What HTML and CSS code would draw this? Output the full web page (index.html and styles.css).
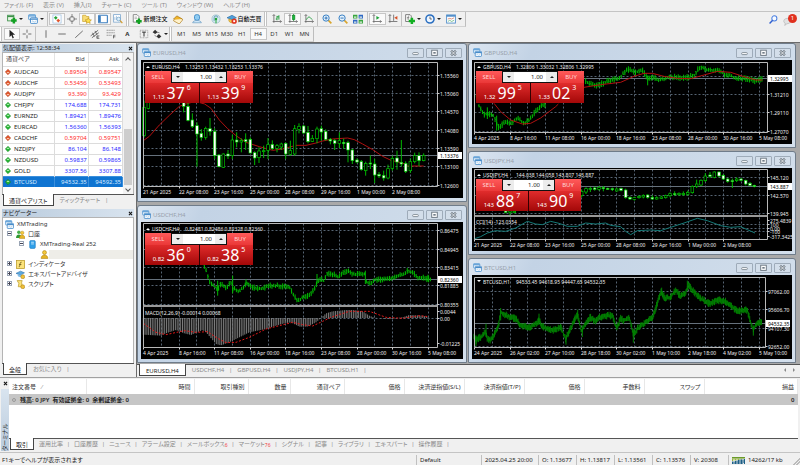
FILE: index.html
```html
<!DOCTYPE html>
<html lang="ja">
<head>
<meta charset="utf-8">
<title>XMTrading</title>
<link rel="stylesheet" href="styles.css">
</head>
<body>
<svg class="sprite" aria-hidden="true">
  <defs>
    <symbol id="i-windows" viewBox="0 0 16 16"><rect x="1" y="1" width="11" height="8" rx="1" fill="#e8f3fc" stroke="#5a9bd4" stroke-width="1.4"/><path d="M1 3h11" stroke="#5a9bd4" stroke-width="2"/><rect x="4" y="6" width="11" height="9" rx="1" fill="#fff" stroke="#3f87c8" stroke-width="1.4"/><path d="M4 8.200h11" stroke="#3f87c8" stroke-width="2"/><path d="M6 12l2-1 2 2 3-2" fill="none" stroke="#7db4e0"/></symbol>
    <symbol id="i-newchart" viewBox="0 0 16 16"><rect x="1" y="2" width="10" height="9" fill="#e7f5e4" stroke="#3b8f48" stroke-width="1.400"/><path d="M1 4h10" stroke="#3b8f48" stroke-width="2"/><path d="M11 6v9M6.500 10.500h9" stroke="#12a022" stroke-width="4"/></symbol>
    <symbol id="i-market" viewBox="0 0 16 16"><rect x="1.500" y="1.500" width="13" height="13" fill="#fff" stroke="#8fb7dc"/><path d="M3 6l3-3 3 3-3 3z" fill="#27a337"/><path d="M7 10.500l3-3 3 3-3 3z" fill="#e0552d"/></symbol>
    <symbol id="i-target" viewBox="0 0 16 16"><circle cx="8" cy="8" r="4" fill="none" stroke="#777" stroke-width="1.400"/><path d="M8 0v6M8 10v6M0 8h6M10 8h6" stroke="#777" stroke-width="1.400"/></symbol>
    <symbol id="i-folderstar" viewBox="0 0 16 16"><path d="M1 2h5l1 2h4v8H1z" fill="#f8dc77" stroke="#c69b22"/><path d="M10 6l1.500 3 3.500.5-2.500 2.300.6 3.200-3.100-1.500-3.100 1.500.6-3.200L5 9.500 8.500 9z" fill="#ffe14d" stroke="#b98a12" stroke-width=".9"/></symbol>
    <symbol id="i-panel" viewBox="0 0 16 16"><rect x="1" y="2" width="14" height="12" rx="1" fill="#fff" stroke="#3d7fc0" stroke-width="1.800"/><path d="M3 3v10" stroke="#3d7fc0" stroke-width="3"/></symbol>
    <symbol id="i-tester" viewBox="0 0 16 16"><rect x="1" y="1" width="11" height="12" fill="#fff" stroke="#7fa8cf" stroke-width="1.300"/><path d="M3 10V5M5.500 10V3M8 10V6" stroke="#7fa8cf"/><circle cx="9" cy="8" r="3" fill="#dff0fb" stroke="#5d93bf"/><path d="M11.500 10.500l3.500 4" stroke="#d39c2b" stroke-width="2"/></symbol>
    <symbol id="i-order" viewBox="0 0 16 16"><path d="M2 1h6l3 3v9H2z" fill="#fff" stroke="#777" stroke-width="1.300"/><path d="M4 5h4M4 7.500h4" stroke="#888"/><path d="M11 7v9M6.500 11.500h9" stroke="#12a022" stroke-width="3.800"/></symbol>
    <symbol id="i-book" viewBox="0 0 16 16"><path d="M6 3l9 5-5 6-9-6z" fill="#f0b429" stroke="#a87410" stroke-width="1.200"/><path d="M1 9v2l9 5 5-6V8" fill="#fff2cc" stroke="#a87410"/></symbol>
    <symbol id="i-person" viewBox="0 0 16 16"><rect x="4" y="1" width="8" height="9" rx="3" fill="#8ecbf2" stroke="#2d80c2" stroke-width="1.300"/><path d="M1 14c1-5 13-5 14 0z" fill="#cfe8fa" stroke="#5f93bd"/></symbol>
    <symbol id="i-signal" viewBox="0 0 16 16"><circle cx="8" cy="8" r="6.500" fill="#d7ebef" stroke="#8bb4c4"/><path d="M5 11V6a3 3 0 016 0" fill="none" stroke="#5f97b5" stroke-width="1.500"/><circle cx="8" cy="8" r="2" fill="#25a43a"/><path d="M8 8v7" stroke="#25a43a" stroke-width="1.600"/></symbol>
    <symbol id="i-auto" viewBox="0 0 16 16"><path d="M0 6l8-4 7 4-7 3z" fill="#4f9ed8" stroke="#2a6da6"/><path d="M3 8v3c2 4 8 4 10 0V8l-5 2z" fill="#f6cb4f" stroke="#b88a1a"/><circle cx="11.500" cy="11.500" r="4.200" fill="#e23420"/><path d="M10 10h3v3h-3z" fill="#fff"/></symbol>
    <symbol id="i-bars" viewBox="0 0 16 16"><path d="M3 1v13M1 12h14M1 3l2-2 2 2M13 10l2 2-2 2" stroke="#666" stroke-width="1.300" fill="none"/><path d="M8 3v7M6 8h2M8 4.500h3M11 2v7" stroke="#1f9a3a" stroke-width="1.500"/></symbol>
    <symbol id="i-candles" viewBox="0 0 16 16"><path d="M3 1v13M1 12h14M1 3l2-2 2 2M13 10l2 2-2 2" stroke="#666" stroke-width="1.300" fill="none"/><path d="M9 0v11" stroke="#138a2b" stroke-width="1.400"/><rect x="7" y="2" width="4" height="7" fill="#1bb53a" stroke="#138a2b"/></symbol>
    <symbol id="i-line" viewBox="0 0 16 16"><path d="M3 1v13M1 12h14M1 3l2-2 2 2M13 10l2 2-2 2" stroke="#666" stroke-width="1.300" fill="none"/><path d="M4 9c3-6 5-5 9 0" fill="none" stroke="#1f9a3a" stroke-width="1.500"/></symbol>
    <symbol id="i-zoomin" viewBox="0 0 16 16"><path d="M9 9l6 6" stroke="#d9a52c" stroke-width="2.600"/><circle cx="6.500" cy="6.500" r="5" fill="#e4f2fc" stroke="#3a80c4" stroke-width="1.600"/><path d="M4 6.500h5M6.500 4v5" stroke="#2a6fb5" stroke-width="1.500"/></symbol>
    <symbol id="i-zoomout" viewBox="0 0 16 16"><path d="M9 9l6 6" stroke="#d9a52c" stroke-width="2.600"/><circle cx="6.500" cy="6.500" r="5" fill="#e4f2fc" stroke="#3a80c4" stroke-width="1.600"/><path d="M4 6.500h5" stroke="#2a6fb5" stroke-width="1.500"/></symbol>
    <symbol id="i-tile" viewBox="0 0 16 16"><path d="M0 1h7v6H0zM9 9h7v6H9z" fill="#3aa63f"/><path d="M9 1h7v6H9zM0 9h7v6H0z" fill="#2f69c4"/><path d="M1.500 4h4v2h-4zM10.500 4h4v2h-4zM1.500 12h4v2h-4zM10.500 12h4v2h-4z" fill="#e6f2e6"/></symbol>
    <symbol id="i-scroll" viewBox="0 0 16 16"><path d="M3 1v13M1 12h14M1 3l2-2 2 2M13 10l2 2-2 2" stroke="#666" stroke-width="1.300" fill="none"/><path d="M7 3l5 3-5 3z" fill="#1fa33a"/></symbol>
    <symbol id="i-shift" viewBox="0 0 16 16"><path d="M3 1v13M1 12h14M1 3l2-2 2 2M9 1v10" stroke="#666" stroke-width="1.300" fill="none"/><path d="M15 3l-5 3 5 3z" fill="#d9532a"/></symbol>
    <symbol id="i-indic" viewBox="0 0 16 16"><path d="M1 1h7l2 2v9H1z" fill="#fff" stroke="#666" stroke-width="1.300"/><path d="M5 10V4c0-1 2-1 2-1M3 6h4" stroke="#555" fill="none"/><path d="M11 6v10M6 11h10" stroke="#12b022" stroke-width="4"/></symbol>
    <symbol id="i-clock" viewBox="0 0 16 16"><circle cx="8" cy="8" r="6.500" fill="#eef6ff" stroke="#2b6fc0" stroke-width="2.400"/><path d="M8 4v4h3" fill="none" stroke="#444" stroke-width="1.200"/></symbol>
    <symbol id="i-template" viewBox="0 0 16 16"><rect x="1" y="1.500" width="14" height="13" fill="#fff" stroke="#4b8ac8" stroke-width="1.400"/><path d="M1 3h14" stroke="#4b8ac8" stroke-width="2.600"/><path d="M3 8l3-1 3 1 4-2" stroke="#c6573c" fill="none"/><path d="M3 12l3-2 3 2 4-2" stroke="#3da05a" fill="none"/></symbol>
    <symbol id="i-cursor" viewBox="0 0 16 16"><path d="M4 1v12l3-3 2 5 2-1-2-5h4z" fill="#222"/></symbol>
    <symbol id="i-cross" viewBox="0 0 16 16"><path d="M8 1v5M8 10v5M1 8h5M10 8h5" stroke="#666" stroke-width="1.500"/></symbol>
    <symbol id="i-vline" viewBox="0 0 16 16"><path d="M8 2v12" stroke="#666" stroke-width="1.500"/></symbol>
    <symbol id="i-hline" viewBox="0 0 16 16"><path d="M2 8h12" stroke="#666" stroke-width="1.500"/></symbol>
    <symbol id="i-trend" viewBox="0 0 16 16"><path d="M2 14L14 3" stroke="#666" stroke-width="1.500"/></symbol>
    <symbol id="i-channel" viewBox="0 0 16 16"><path d="M1 11L13 2M3 14L14 6M4 6l3 6M8 3l3 6" stroke="#555" stroke-width="1.300"/><path d="M15 11h-4v4h4M11 13h3" stroke="#333" fill="none"/></symbol>
    <symbol id="i-fibo" viewBox="0 0 16 16"><path d="M1 2h13M1 6h13M1 10h9" stroke="#777" stroke-width="1.300" stroke-dasharray="2 1"/><path d="M12 15v-5h3M12 12.500h3" stroke="#333" fill="none"/></symbol>
    <symbol id="i-label" viewBox="0 0 16 16"><rect x="2" y="2" width="12" height="12" fill="none" stroke="#777" stroke-dasharray="1.500 1"/><path d="M5 5h6M8 5v7" stroke="#333" stroke-width="1.600"/></symbol>
    <symbol id="i-arrows" viewBox="0 0 16 16"><path d="M5 1l4 4-4 3-4-3zM11 8l4 4-4 3-4-3z" fill="#333"/><path d="M8 5l4 1M4 10l3 2" stroke="#555"/></symbol>
    <symbol id="i-search" viewBox="0 0 16 16"><circle cx="9.500" cy="6" r="4.500" fill="#f6faff" stroke="#4a7fe0" stroke-width="1.800"/><path d="M6.500 9.500L1 15" stroke="#2f5fd0" stroke-width="2.600"/></symbol>
    <symbol id="i-chat" viewBox="0 0 16 16"><path d="M2 5c3-4 11-3 12 1s-4 6-7 6l-4 3 1-4C1 10 1 7 2 5z" fill="#e2e2e2" stroke="#aaa"/></symbol>
    <symbol id="i-accounts" viewBox="0 0 16 16"><circle cx="5" cy="4" r="3" fill="#46b04a"/><path d="M0 14c0-8 10-8 10 0z" fill="#2f9a35"/><circle cx="11" cy="5" r="3" fill="#f4c93c" stroke="#a97f13" stroke-width=".8"/><path d="M6 15c0-8 10-8 10 0z" fill="#e8b526" stroke="#a97f13" stroke-width=".8"/></symbol>
    <symbol id="i-server" viewBox="0 0 16 16"><rect x="3" y="1" width="10" height="14" rx="2" fill="#2f9fe8" stroke="#1a77bd"/><path d="M5.500 4h5M5.500 7h5" stroke="#d5efff" stroke-width="1.400"/></symbol>
    <symbol id="i-user" viewBox="0 0 16 16"><circle cx="8" cy="4.500" r="3.500" fill="#f4c93c" stroke="#a97f13"/><path d="M2 15c0-8 12-8 12 0z" fill="#e8b526" stroke="#a97f13"/></symbol>
    <symbol id="i-func" viewBox="0 0 16 16"><rect x="1" y="1" width="14" height="14" fill="#fbe27a" stroke="#b9961f" stroke-width="1.300"/><path d="M10 4c-2-1-2.500 1-3 4s-1 5-2 4M5.500 8h4" fill="none" stroke="#5c4a0c" stroke-width="1.300"/></symbol>
    <symbol id="i-expert" viewBox="0 0 16 16"><path d="M0 6l8-4 7 3-7 4z" fill="#5ba8de" stroke="#2a6da6"/><path d="M3 8v2c2 3 6 3 8 0V7l-3 2z" fill="#7fbde8"/><circle cx="12" cy="12" r="3.500" fill="#f0c03a" stroke="#a97f13"/></symbol>
    <symbol id="i-script" viewBox="0 0 16 16"><path d="M2 1h9l-1 3 1 8H4l1-6z" fill="#fbe27a" stroke="#b9961f" stroke-width="1.200"/><circle cx="12" cy="12" r="3.500" fill="#f0c03a" stroke="#a97f13"/></symbol>
    <symbol id="i-up" viewBox="0 0 10 10"><path d="M5 .5L9.500 5 5 9.500.5 5z" fill="#27b535" stroke="#0f7a1c" stroke-width=".8"/><path d="M5 2.500L7.500 5h-5z" fill="#baf2b8"/></symbol>
    <symbol id="i-down" viewBox="0 0 10 10"><path d="M5 .5L9.500 5 5 9.500.5 5z" fill="#e2572b" stroke="#a32f10" stroke-width=".8"/><path d="M5 7.500L7.500 5h-5z" fill="#ffd0b8"/></symbol>
    <symbol id="i-min" viewBox="0 0 16 10"><rect x="4.500" y="4.500" width="7" height="2.500" rx="1" fill="#fff" stroke="#6d7883"/></symbol>
    <symbol id="i-max" viewBox="0 0 16 10"><rect x="4.500" y="1.500" width="7" height="6.500" fill="#fff" stroke="#6d7883" stroke-width="1.200"/><rect x="6.500" y="3.800" width="3" height="2" fill="#6d7883"/></symbol>
    <symbol id="i-x" viewBox="0 0 16 10"><path d="M5 2l6 6M11 2L5 8" stroke="#6d7883" stroke-width="2.800"/><path d="M5 2l6 6M11 2L5 8" stroke="#fff" stroke-width="1"/></symbol>
    <symbol id="i-close" viewBox="0 0 8 8"><path d="M1.500 1.500l5 5M6.500 1.500l-5 5" stroke="#111" stroke-width="1.700"/></symbol>
    <symbol id="i-traffic" viewBox="0 0 26 14"><path d="M0 0h26v3H0z" fill="#6b9a2c"/><path d="M1 3v5M4 3v4M7 3v4M10 3v3M13 3v3M16 3v2M19 3v2M22 3v1" stroke="#9ab83f" stroke-width="2"/><path d="M1 9v5M4 9v5M7 8v6M10 7v7M13 6v8M16 5v9M19 5v9M22 5v9M25 4v10" stroke="#1d5f86" stroke-width="2.200"/></symbol>
  </defs>
</svg>

<nav class="menu">
  <a href="#">ファイル (F)</a><a href="#">表示 (V)</a><a href="#">挿入(I)</a><a href="#">チャート (C)</a><a href="#">ツール (T)</a><a href="#">ウィンドウ (W)</a><a href="#">ヘルプ (H)</a>
</nav>

<div class="toolbar">
  <div class="strip main-tools">
    <div class="group drops g-file">
      <button aria-label="新規チャート"><svg><use href="#i-newchart"/></svg><i class="caret"></i></button>
      <button aria-label="組表示"><svg><use href="#i-windows"/></svg><i class="caret"></i></button>
    </div>
    <div class="group g-view">
      <button class="on" aria-label="気配値表示"><svg><use href="#i-market"/></svg></button>
      <button aria-label="データウィンドウ"><svg><use href="#i-target"/></svg></button>
      <button class="on" aria-label="ナビゲーター"><svg><use href="#i-folderstar"/></svg></button>
      <button class="on" aria-label="ターミナル"><svg><use href="#i-panel"/></svg></button>
      <button aria-label="ストラテジーテスター"><svg><use href="#i-tester"/></svg></button>
    </div>
    <div class="group grip g-order">
      <button class="wide"><svg><use href="#i-order"/></svg>新規注文</button>
      <button aria-label="メタエディター"><svg><use href="#i-book"/></svg></button>
      <button aria-label="コミュニティ"><svg><use href="#i-person"/></svg></button>
      <button aria-label="シグナル"><svg><use href="#i-signal"/></svg></button>
      <button class="wide"><svg><use href="#i-auto"/></svg>自動売買</button>
    </div>
    <div class="group grip g-three">
      <button aria-label="バーチャート"><svg><use href="#i-bars"/></svg></button>
      <button class="on" aria-label="ローソク足"><svg><use href="#i-candles"/></svg></button>
      <button aria-label="ラインチャート"><svg><use href="#i-line"/></svg></button>
    </div>
    <div class="group g-zoom">
      <button aria-label="ズームイン"><svg><use href="#i-zoomin"/></svg></button>
      <button aria-label="ズームアウト"><svg><use href="#i-zoomout"/></svg></button>
      <button aria-label="整列"><svg><use href="#i-tile"/></svg></button>
    </div>
    <div class="group g-two">
      <button class="on" aria-label="自動スクロール"><svg><use href="#i-scroll"/></svg></button>
      <button aria-label="チャートシフト"><svg><use href="#i-shift"/></svg></button>
    </div>
    <div class="group drops g-ind">
      <button aria-label="インディケータ"><svg><use href="#i-indic"/></svg><i class="caret"></i></button>
      <button aria-label="時間足"><svg><use href="#i-clock"/></svg><i class="caret"></i></button>
      <button aria-label="定型チャート"><svg><use href="#i-template"/></svg><i class="caret"></i></button>
    </div>
  </div>
  <div class="corner">
    <button aria-label="検索"><svg><use href="#i-search"/></svg></button>
    <button aria-label="通知"><svg><use href="#i-chat"/></svg><span class="badge">1</span></button>
  </div>
</div>

<div class="toolbar">
  <div class="strip">
    <div class="group grip g-cursor">
      <button class="on" aria-label="カーソル"><svg><use href="#i-cursor"/></svg></button>
      <button aria-label="十字カーソル"><svg><use href="#i-cross"/></svg></button>
    </div>
    <div class="group g-draw">
      <button aria-label="垂直線"><svg><use href="#i-vline"/></svg></button>
      <button aria-label="水平線"><svg><use href="#i-hline"/></svg></button>
      <button aria-label="トレンドライン"><svg><use href="#i-trend"/></svg></button>
      <button aria-label="チャネル"><svg><use href="#i-channel"/></svg></button>
      <button aria-label="フィボナッチ"><svg><use href="#i-fibo"/></svg></button>
      <button class="letter">A</button>
      <button aria-label="ラベル"><svg><use href="#i-label"/></svg></button>
      <button aria-label="矢印"><svg><use href="#i-arrows"/></svg><i class="caret"></i></button>
    </div>
    <div class="group grip g-time">
      <button>M1</button><button>M5</button><button>M15</button><button>M30</button><button>H1</button><button class="on">H4</button><button>D1</button><button>W1</button><button>MN</button>
    </div>
  </div>
</div>

<main class="main">
  <aside class="dock">
    <section class="panel">
      <header class="panel-title"><h2>気配値表示: 12:58:34</h2><button aria-label="閉じる"><svg><use href="#i-close"/></svg></button></header>
      <div class="watch">
        <table class="quotes">
          <colgroup><col class="c-pair"><col class="c-price"><col class="c-price"></colgroup>
          <thead><tr><th>通貨ペア</th><th>Bid</th><th>Ask</th></tr></thead>
          <tbody>
            <tr class="down"><td><svg><use href="#i-down"/></svg>AUDCAD</td><td>0.89504</td><td>0.89547</td></tr>
            <tr class="down"><td><svg><use href="#i-down"/></svg>AUDCHF</td><td>0.53456</td><td>0.53493</td></tr>
            <tr class="down"><td><svg><use href="#i-down"/></svg>AUDJPY</td><td>93.390</td><td>93.429</td></tr>
            <tr><td><svg><use href="#i-up"/></svg>CHFJPY</td><td>174.688</td><td>174.731</td></tr>
            <tr><td><svg><use href="#i-up"/></svg>EURNZD</td><td>1.89421</td><td>1.89476</td></tr>
            <tr><td><svg><use href="#i-up"/></svg>EURCAD</td><td>1.56360</td><td>1.56393</td></tr>
            <tr class="down"><td><svg><use href="#i-down"/></svg>CADCHF</td><td>0.59704</td><td>0.59751</td></tr>
            <tr><td><svg><use href="#i-up"/></svg>NZDJPY</td><td>86.104</td><td>86.148</td></tr>
            <tr><td><svg><use href="#i-up"/></svg>NZDUSD</td><td>0.59837</td><td>0.59865</td></tr>
            <tr><td><svg><use href="#i-up"/></svg>GOLD</td><td>3307.56</td><td>3307.88</td></tr>
            <tr class="selected"><td><svg><use href="#i-up"/></svg>BTCUSD</td><td>94532.35</td><td>94592.35</td></tr>
          </tbody>
        </table>
        <div class="scroll"><i class="chev up"></i><span class="thumb"></span><i class="chev dn"></i></div>
      </div>
      <div class="tabs"><button class="active">通貨ペアリスト</button><button>ティックチャート</button></div>
    </section>
    <section class="panel grow">
      <header class="panel-title"><h2>ナビゲーター</h2><button aria-label="閉じる"><svg><use href="#i-close"/></svg></button></header>
      <ul class="tree">
        <li><svg><use href="#i-windows"/></svg>XMTrading
          <ul>
            <li class="open"><i class="toggle"></i><svg><use href="#i-accounts"/></svg>口座
              <ul>
                <li class="open"><i class="toggle"></i><svg><use href="#i-server"/></svg>XMTrading-Real 252
                  <ul><li class="leaf"><svg><use href="#i-user"/></svg><span class="blank"></span></li></ul>
                </li>
              </ul>
            </li>
            <li><i class="toggle"></i><svg><use href="#i-func"/></svg>インディケータ</li>
            <li><i class="toggle"></i><svg><use href="#i-expert"/></svg>エキスパートアドバイザ</li>
            <li><i class="toggle"></i><svg><use href="#i-script"/></svg>スクリプト</li>
          </ul>
        </li>
      </ul>
      <div class="tabs"><button class="active">全般</button><button>お気に入り</button></div>
    </section>
  </aside>

  <div class="work">
    <div class="desk">
      <div class="column">
        <article class="window" data-chart="eurusd"></article>
        <article class="window" data-chart="usdchf"></article>
      </div>
      <div class="column">
        <article class="window" data-chart="gbpusd"></article>
        <article class="window" data-chart="usdjpy"></article>
        <article class="window" data-chart="btcusd"></article>
      </div>
    </div>
    <div class="tabs chart-tabs">
      <button class="active">EURUSD,H4</button><button>USDCHF,H4</button><button>GBPUSD,H4</button><button>USDJPY,H4</button><button>BTCUSD,H1</button>
      <span class="pager"><i class="tri left"></i><i class="tri right"></i></span>
    </div>
  </div>
</main>

<section class="terminal">
  <div class="side"><button aria-label="閉じる"><svg><use href="#i-close"/></svg></button><h2>ターミナル</h2></div>
  <div class="term-body">
    <table class="orders">
      <colgroup><col class="o1"><col class="o2"><col class="o3"><col class="o4"><col class="o3"><col class="o5"><col class="o5"><col class="o5"><col class="o5"><col class="o5"><col class="o5"><col></colgroup>
      <thead><tr><th>注文番号 <span class="sort">⁄</span></th><th>時間</th><th>取引種別</th><th>数量</th><th>通貨ペア</th><th>価格</th><th>決済逆指値(S/L)</th><th>決済指値(T/P)</th><th>価格</th><th>手数料</th><th>スワップ</th><th>損益</th></tr></thead>
      <tbody><tr><td colspan="11"><i class="dot"></i>残高: 0 JPY&nbsp; 有効証拠金: 0&nbsp; 余剰証拠金: 0</td><td>0</td></tr></tbody>
    </table>
    <div class="tabs term-tabs">
      <button class="active">取引</button><button>運用比率</button><button>口座履歴</button><button>ニュース</button><button>アラーム設定</button><button>メールボックス<sub>6</sub></button><button>マーケット<sub>76</sub></button><button>シグナル</button><button>記事</button><button>ライブラリ</button><button>エキスパート</button><button>操作履歴</button>
    </div>
  </div>
</section>

<footer class="status">
  <span class="hint">F1キーでヘルプが表示されます</span>
  <span class="s-name">Default</span><span class="s-date">2025.04.25 20:00</span><span>O: 1.13677</span><span>H: 1.13817</span><span>L: 1.13561</span><span>C: 1.13576</span><span>V: 20308</span>
  <span class="s-net"><svg><use href="#i-traffic"/></svg>14262/17 kb</span>
</footer>
<script src="charts.js"></script>
</body>
</html>
```
FILE: styles.css
```css
* { box-sizing: border-box; }

body {
  margin: 0;
  min-height: 100vh;
  display: flex;
  flex-direction: column;
  background: #f0f0f0;
  color: #222;
  font: 6px/8px "Noto Sans", "Noto Sans CJK JP", sans-serif;
  font-feature-settings: "palt";
}

button {
  margin: 0;
  padding: 0;
  border: 0;
  background: none;
  color: inherit;
  font: inherit;
  font-feature-settings: inherit;
  white-space: nowrap;
}

h2 { margin: 0; font: inherit; }
table { border-collapse: collapse; table-layout: fixed; width: 100%; }
th { font-weight: 400; }
svg { display: block; flex: none; }
.sprite { position: absolute; width: 0; height: 0; }

/* Menu */
.menu {
  display: flex;
  gap: 10px;
  height: 12px;
  padding: 1px 4px;
  border-bottom: 1px solid #c4c4c4;
}
.menu a { color: #8c8c8c; text-decoration: none; white-space: nowrap; }

/* Toolbars */
.toolbar { display: flex; justify-content: space-between; height: 15px; }
.strip {
  display: flex;
  border-right: 1px solid #bdbdbd;
  border-bottom: 1px solid #d2d2d2;
}
.group { display: flex; border-right: 1px solid #c2c2c2; padding: 1px; }
.group:last-child { border-right: 0; }
.grip { border-left: 1px solid #fff; box-shadow: inset 1px 0 #c2c2c2; padding-left: 3px; }
.group button {
  flex: 1;
  display: flex;
  align-items: center;
  justify-content: center;
  gap: 2px;
  color: #333;
}
.group button.on { background: #fafafa; border: 1px solid #c6c6c6; }
.group button.wide { flex: none; width: 38px; color: #111; gap: 1px; font-weight: 500; }
.group svg { width: 10px; height: 10px; }
.group .letter { font-weight: 700; }
.caret { border: 2px solid transparent; border-top-color: #222; border-bottom: 0; }
.g-file { width: 48px; padding-left: 4px; }
.g-view { width: 79px; }
.g-order { width: 138px; }
.g-three { width: 53px; }
.g-zoom { width: 50px; }
.g-two { width: 34px; }
.g-ind { width: 63px; }
.g-cursor { width: 36px; }
.g-draw { width: 134px; padding-left: 2px; }
.g-time { width: 143px; }

.corner { display: flex; align-items: center; gap: 5px; padding-right: 3px; }
.corner button { position: relative; }
.corner svg { width: 9px; height: 9px; }
.corner button:last-child { padding: 3px 5px 0 0; }
.badge {
  position: absolute;
  top: 0;
  right: 0;
  width: 9px;
  height: 9px;
  border-radius: 50%;
  background: #e0301e;
  color: #fff;
  text-align: center;
}

/* Main area */
.main { flex: 1; display: flex; border-top: 1px solid #6b6b6b; }
.dock { width: 136px; flex: none; display: flex; flex-direction: column; gap: 3px; padding: 1px 2px 2px; }
.panel { display: flex; flex-direction: column; }
.grow { flex: 1; }
.panel-title {
  display: flex;
  justify-content: space-between;
  align-items: center;
  padding: 0 1px;
  background: linear-gradient(90deg, #b9cbdd, #d9e4ef);
}
.panel-title svg, .side svg { width: 5px; height: 5px; }
.watch { display: flex; background: #fff; border: 1px solid #b4b4b4; border-bottom: 0; }
.quotes { flex: 1; align-self: flex-start; margin-bottom: 7px; }
.c-pair { width: 51px; }
.quotes th { height: 13px; padding: 0 3px; text-align: right; color: #444; border-right: 1px solid #e4e4e4; }
.quotes th:first-child { text-align: left; }
.quotes td {
  height: 11px;
  padding: 0 1px;
  text-align: right;
  color: #1f1fff;
  border-top: 1px solid #dcdcdc;
  border-right: 1px solid #dcdcdc;
}
.quotes td:first-child { text-align: left; color: #222; }
.quotes td svg { display: inline-block; width: 6px; height: 6px; margin: 0 3px 0 1px; vertical-align: -1px; }
.quotes .down td { color: #ff2a2a; }
.quotes .down td:first-child { color: #222; }
.quotes .selected td, .quotes .selected td:first-child { background: #0f74d1; color: #d7ebff; border-color: #3b8fdc; }
.scroll {
  width: 10px;
  display: flex;
  flex-direction: column;
  align-items: center;
  padding: 5px 1px 3px;
  background: #f3f3f3;
}
.thumb { width: 8px; height: 56px; margin: auto 0 2px; background: #cdcdcd; }
.chev { width: 4px; height: 4px; border: solid #555; border-width: 1px 0 0 1px; transform: rotate(45deg); }
.chev.dn { transform: rotate(225deg); }

.tabs { display: flex; align-items: flex-start; height: 12px; border-top: 1px solid #555; color: #8a8a8a; }
.tabs button { padding: 1px 6px; border-right: 1px solid transparent; position: relative; }
.tabs button:not(.active)::after { content: "|"; position: absolute; top: 1px; right: -2px; }
.tabs .active {
  height: 12px;
  margin: -1px 0 0 1px;
  padding: 2px 5px 0;
  border: 1px solid #444;
  border-top: 0;
  background: #fff;
  color: #222;
}

.tree, .tree ul { list-style: none; margin: 0; padding: 0; }
.tree {
  flex: 1;
  padding: 1px 0 0 2px;
  line-height: 10px;
  color: #333;
  background: #fff;
  border: 1px solid #b4b4b4;
  border-bottom: 0;
}
.tree svg { display: inline-block; width: 9px; height: 9px; margin-right: 3px; vertical-align: -3px; }
.tree ul { padding-left: 2px; }
.tree ul ul { padding-left: 12px; }
.tree .toggle {
  display: inline-block;
  width: 5px;
  height: 5px;
  margin-right: 4px;
  border: 1px solid #9aa5b5;
  background: linear-gradient(#445, #445) center / 3px 1px no-repeat, #fff;
}
.tree li:not(.open) > .toggle {
  background: linear-gradient(#445, #445) center / 3px 1px no-repeat, linear-gradient(#445, #445) center / 1px 3px no-repeat, #fff;
}
.tree .leaf { display: flex; align-items: center; height: 10px; padding-left: 9px; }
.leaf svg { margin: 0; }
.blank { flex: 1; height: 9px; background: #eeede8; }

/* Chart windows */
.work { flex: 1; display: flex; flex-direction: column; border-left: 1px solid #6b6b6b; }
.desk {
  display: grid;
  grid-template-columns: 330fr 328fr;
  gap: 1px;
  padding: 0 4px 1px 0;
  background: #a9a9a9;
}
.column { display: flex; flex-direction: column; justify-content: space-between; gap: 3px; min-width: 0; }
.window {
  padding: 0 3px 3px;
  border: 1px solid #6f7c8a;
  border-radius: 3px 3px 0 0;
  background: linear-gradient(115deg, #dce6f1, #c3d3e5 60px, #d3dfec);
}
.window-title { display: flex; align-items: center; gap: 2px; height: 16px; padding: 1px 1px 0; color: #98a1ab; }
.window-title svg { width: 9px; height: 9px; }
.window-title h2 { flex: 1; }
.window-title button { border: 1px solid #9eabb9; border-radius: 1px; background: #d3deea; }
.window-title button svg { width: 15px; height: 8px; }
.chart { position: relative; background: #000; }
.plot { width: 100%; height: auto; font-size: 5px; }
.plot text { fill: #f0f0f0; }
.plot .frame { fill: none; stroke: #b9b9b9; }
.plot .grid { stroke: #566473; stroke-dasharray: 2 2; fill: none; }
.plot .tick { stroke: #d0d0d0; fill: none; }
.plot .now { stroke: #66717c; }
.plot .tag { fill: #fff; }
.plot text.tag-text { fill: #000; }
.plot .green { stroke: #00b800; fill: none; stroke-width: 3; }
.plot .dense { stroke: #008200; }
.plot .bull { fill: #000; stroke: #00c800; stroke-width: 2; }
.plot .bear { fill: #fff; stroke: #00c800; stroke-width: 2; }
.plot .average { fill: none; stroke: #b01010; stroke-width: 3; }
.plot .signal { fill: none; stroke: #e01818; stroke-width: 3; stroke-dasharray: 6 5; }
.plot .hist { fill: none; stroke: #7d7d7d; stroke-width: 3; }
.plot .cci { fill: none; stroke: #157a78; stroke-width: 3; }
.plot .split { stroke: #999; stroke-width: 2; }

.deal {
  position: absolute;
  top: 11px;
  left: 4px;
  width: 108px;
  display: grid;
  grid-template-columns: 1fr 1fr;
  column-gap: 1px;
  background: #300;
}
.deal.compact { width: 105px; }
.deal-top { grid-column: 1 / 3; display: flex; height: 12px; }
.deal button { background: linear-gradient(#ff5a5a, #ea3838); color: #ffd6d6; }
.deal-top > button { width: 26px; }
.deal .lots { flex: 1; display: flex; padding: 1px; background: #111; min-width: 0; }
.lots button { width: 11px; background: #ececec; display: flex; align-items: center; justify-content: center; }
.lots .caret.rise { transform: rotate(180deg); }
.lots input {
  flex: 1;
  width: 20px;
  min-width: 0;
  padding: 0 3px;
  border: 0;
  background: #fff;
  color: #222;
  font: inherit;
  text-align: right;
}
.deal .price {
  display: flex;
  justify-content: center;
  align-items: flex-end;
  gap: 2px;
  height: 20px;
  padding-bottom: 2px;
  background: linear-gradient(#e12c2c, #a30808);
  color: #fff;
}
.price b { font-size: 16px; line-height: 16px; font-weight: 400; }
.price sup { align-self: flex-start; font-size: 7px; line-height: 10px; }

.chart-tabs { height: 13px; padding-left: 1px; }
.chart-tabs .active { padding: 2px 6px 0; }
.pager { margin-left: auto; padding: 3px 5px 0 0; display: flex; gap: 7px; }
.tri { border: 2px solid transparent; }
.tri.left { border-right-color: #888; border-left: 0; }
.tri.right { border-left-color: #888; border-right: 0; }

/* Terminal */
.terminal { display: flex; border-top: 1px solid #a0a0a0; padding: 1px 2px 1px 1px; }
.side { width: 8px; display: flex; flex-direction: column; align-items: center; padding-top: 2px; gap: 3px; }
.side h2 {
  flex: 1;
  width: 8px;
  line-height: 8px;
  writing-mode: vertical-rl;
  text-orientation: sideways;
  transform: rotate(180deg);
  background: linear-gradient(#b9cbdd, #d9e4ef);
  white-space: nowrap;
}
.term-body { flex: 1; background: #fff; }
.orders { margin-bottom: 33px; }
.orders th { height: 15px; padding: 0 3px; text-align: right; color: #333; border-right: 1px solid #e8e8e8; white-space: nowrap; }
.orders th:first-child { text-align: left; }
.sort { margin-left: 4px; color: #888; }
.orders td { height: 11px; padding: 0 3px; background: #c6c6c6; font-weight: 600; text-align: right; }
.orders td:first-child { text-align: left; }
.dot { display: inline-block; width: 4px; height: 4px; margin-right: 4px; border: 1px solid #999; border-radius: 50%; }
.o1 { width: 77px; }
.o2 { width: 108px; }
.o3 { width: 54px; }
.o4 { width: 42px; }
.o5 { width: 60px; }
.term-tabs { height: 13px; background: #f0f0f0; }
.term-tabs button { padding: 1px 5px; }
.term-tabs .active { padding: 2px 5px 0; }
.term-tabs sub { color: #f04040; font-size: 5px; line-height: 5px; vertical-align: -1px; }

/* Status bar */
.status {
  display: flex;
  align-items: center;
  height: 14px;
  padding: 1px 0 0 2px;
  border-top: 1px solid #c4c4c4;
  white-space: nowrap;
}
.status span { width: 38px; padding-left: 3px; border-left: 1px solid #c0c0c0; line-height: 10px; }
.status .hint { flex: 1; padding: 0; border: 0; }
.status .s-name { width: 65px; }
.status .s-date { width: 57px; }
.status .s-net { width: 72px; padding-left: 3px; display: flex; align-items: center; gap: 3px; background: linear-gradient(135deg, transparent 50%, #bbb 50%, #bbb 60%, transparent 60%, transparent 70%, #bbb 70%, #bbb 80%, transparent 80%) right bottom / 7px 7px no-repeat; }
.s-net svg { width: 13px; height: 7px; }
```
FILE: charts.js
```js
// Series are stored in thirds of a pixel; "origin" is the plot's corner in those units.
const shortDates = ["21 Apr 2025", "22 Apr 08:00", "23 Apr 16:00", "25 Apr 00:00", "28 Apr 08:00", "29 Apr 16:00", "1 May 00:00", "2 May 08:00"];
const longDates = ["4 Apr 2025", "8 Apr 16:00", "11 Apr 08:00", "16 Apr 00:00", "18 Apr 16:00", "23 Apr 08:00", "28 Apr 00:00", "30 Apr 16:00", "5 May 08:00"];

const charts = {
  eurusd: {
    title: "EURUSD,H4", w: 322, h: 138, origin: [15, 48], right: 296, top: 2, bottom: 126,
    quote: "1.13253 1.13432 1.13253 1.13376",
    levels: [[93, "1.15560"], [148, "1.15060"], [203, "1.14570"], [258, "1.14080"], [313, "1.13590"], [368, "1.13100"], [423, "1.12600"]],
    now: [335, "1.13376"], dates: shortDates, deal: ["1.13", "37", "6", "1.13", "39", "9"],
    average: [[22, 290, 40, 277, 70, 243, 100, 214, 130, 187, 150, 180, 178, 172, 206, 180, 225, 193, 250, 228, 275, 254, 300, 275, 330, 295, 370, 308, 410, 319, 440, 315, 480, 304, 510, 304, 540, 297, 560, 291, 590, 285, 635, 282, 655, 287, 680, 300, 710, 317, 740, 337, 765, 349, 800, 357, 815, 366, 863, 366]],
    // x, body top, body bottom, high, low, falling
    candles: [[24, 190, 275, 170, 280, 0], [37, 170, 193, 165, 196, 0], [143, 170, 187, 165, 205, 1], [156, 187, 229, 175, 232, 1], [169, 228, 247, 208, 252, 1], [183, 245, 270, 235, 368, 1], [196, 268, 280, 255, 290, 1], [209, 253, 280, 248, 287, 0], [222, 254, 262, 222, 275, 1], [236, 262, 335, 253, 345, 1], [249, 333, 368, 330, 370, 1], [262, 330, 370, 328, 372, 0], [276, 330, 336, 318, 345, 1], [289, 288, 335, 272, 345, 0], [302, 288, 294, 265, 310, 1], [316, 289, 294, 283, 325, 0], [329, 287, 293, 268, 318, 1], [343, 286, 327, 280, 328, 1], [356, 326, 342, 322, 363, 1], [369, 321, 341, 310, 357, 0], [383, 320, 323, 305, 342, 0], [396, 302, 319, 282, 345, 0], [409, 301, 314, 289, 318, 1], [423, 305, 313, 300, 325, 0], [436, 300, 309, 296, 318, 0], [449, 298, 330, 295, 345, 1], [463, 320, 331, 290, 335, 0], [476, 254, 330, 243, 335, 0], [489, 247, 256, 238, 268, 0], [503, 246, 267, 243, 269, 1], [516, 265, 293, 246, 298, 1], [529, 283, 292, 273, 294, 0], [543, 255, 284, 248, 298, 0], [556, 254, 264, 245, 290, 1], [569, 262, 286, 256, 290, 1], [583, 286, 291, 282, 301, 1], [596, 289, 298, 285, 318, 1], [610, 290, 298, 265, 312, 0], [623, 295, 299, 284, 315, 1], [636, 296, 318, 290, 355, 1], [649, 318, 350, 315, 360, 1], [663, 348, 354, 343, 358, 1], [676, 353, 377, 348, 380, 1], [689, 358, 380, 353, 395, 0], [703, 357, 360, 334, 375, 1], [716, 360, 393, 344, 417, 1], [729, 391, 396, 384, 402, 1], [743, 394, 402, 380, 410, 1], [756, 374, 402, 362, 406, 0], [769, 343, 373, 335, 380, 0], [783, 342, 354, 320, 377, 1], [796, 355, 360, 288, 368, 1], [809, 358, 382, 352, 387, 1], [823, 353, 380, 343, 387, 0], [836, 335, 353, 326, 358, 0], [849, 335, 350, 325, 367, 1], [863, 334, 350, 328, 352, 0]]
  },
  usdchf: {
    title: "USDCHF,H4", w: 322, h: 137, origin: [15, 54], right: 296, top: 1, bottom: 125, split: 84,
    quote: "0.82481 0.82486 0.82328 0.82360",
    levels: [[80, "0.86475"], [135, "0.84945"], [190, "0.83415"], [245, "0.81885"], [300, "0.80355"]],
    extra: [[321, "0.0044"], [342, "0.00"], [419, "-0.01225"]], extraGrid: [342],
    now: [227, "0.82360"], dates: longDates, deal: ["0.82", "36", "0", "0.82", "38", "5"],
    label: [324, "MACD(12,26,9) -0.00014 0.00068"], spread: 7, step: 5.34,
    bars: [[205, 185, 212, 205, 222, 235, 240, 252, 245, 262, 252, 240, 270, 250, 285, 235, 290, 252, 310, 262, 335, 235, 345, 250, 375, 255, 400, 245, 420, 245, 460, 248, 470, 270, 485, 292, 495, 285, 505, 278, 520, 275, 535, 255, 545, 235, 555, 225, 565, 232, 572, 208, 590, 210, 605, 218, 635, 200, 655, 212, 685, 208, 692, 235, 700, 240, 715, 228, 745, 226, 765, 225, 775, 220, 800, 212, 815, 200, 830, 205, 845, 220, 860, 220, 870, 225, 885, 225]],
    spikes: [[162, 175, 184], [245, 230, 275], [290, 215, 268], [330, 226, 245], [543, 210, 240], [688, 200, 240], [876, 212, 232], [22, 98, 107]],
    zero: 342,
    hist: [22, 392, 75, 395, 90, 388, 120, 378, 145, 388, 165, 393, 200, 378, 210, 385, 240, 420, 255, 424, 280, 415, 300, 405, 340, 385, 390, 375, 420, 365, 445, 358, 465, 355, 490, 368, 515, 368, 540, 355, 555, 342, 570, 328, 590, 322, 630, 318, 650, 318, 680, 322, 700, 335, 715, 341, 760, 345, 800, 340, 820, 333, 860, 335, 878, 340],
    signal: [22, 358, 60, 385, 90, 392, 145, 380, 180, 385, 215, 383, 240, 400, 270, 416, 300, 415, 340, 400, 390, 375, 430, 365, 470, 355, 500, 362, 530, 366, 560, 352, 590, 338, 640, 322, 700, 322, 750, 340, 800, 343, 850, 335, 878, 338]
  },
  gbpusd: {
    title: "GBPUSD,H4", w: 320, h: 84, origin: [24, 48], right: 295, top: 2, bottom: 72,
    quote: "1.32806 1.33032 1.32806 1.32995",
    levels: [[97, ""], [151, "1.31210"], [206, "1.29110"], [261, "1.27070"]],
    now: [103, "1.32995"], dates: longDates, deal: ["1.32", "99", "5", "1.33", "02", "3"],
    spread: 8, step: 5.34,
    average: [[90, 178, 110, 203, 140, 228, 175, 240, 200, 238, 230, 222, 275, 188, 283, 180], [360, 130, 410, 122, 470, 115, 510, 97, 540, 88, 565, 88, 600, 97, 640, 103, 680, 104, 720, 93, 760, 82, 800, 85, 840, 98, 875, 108, 895, 108]],
    bars: [[45, 186, 60, 212, 75, 208, 90, 215, 100, 245, 108, 252, 115, 240, 130, 235, 140, 240, 155, 225, 165, 224, 175, 235, 185, 238, 200, 222, 220, 195, 245, 180], [365, 110, 375, 120, 400, 125, 430, 112, 445, 108, 470, 100, 480, 85, 490, 76, 515, 85, 535, 78, 545, 95, 553, 105, 565, 98, 580, 108, 600, 105, 615, 98, 640, 100, 660, 102, 690, 95, 700, 78, 712, 70, 730, 78, 760, 80, 775, 85, 785, 95, 800, 95, 815, 103, 850, 105, 875, 110, 895, 105]],
    spikes: [[32, 152, 160], [551, 95, 124], [98, 215, 260], [70, 190, 225]]
  },
  usdjpy: {
    title: "USDJPY,H4", w: 320, h: 83, origin: [24, 60], right: 295, top: 1, bottom: 71, split: 48,
    quote: "144.038 144.058 143.807 143.887",
    levels: [[88, "145.120"], [143, "142.570"], [197, "139.945"]],
    extra: [[216, "275.4839"], [229, "100"], [240, "0.00"], [251, "-100"], [265, "-317.3425"]], extraGrid: [229, 240, 251],
    now: [115, "143.887"], dates: shortDates, compact: true, deal: ["143", "88", "7", "143", "90", "9"],
    label: [221, "CCI(14) -123.0354"],
    candles: [[125, 189, 193, 188, 196, 1], [138, 189, 193, 188, 202, 0], [151, 190, 194, 188, 196, 0], [353, 130, 143, 125, 148, 0], [366, 122, 132, 118, 138, 0], [379, 121, 124, 117, 132, 0], [392, 120, 124, 116, 128, 1], [405, 118, 124, 114, 128, 0], [418, 119, 122, 114, 130, 1], [431, 121, 123, 119, 126, 1], [445, 122, 125, 119, 129, 1], [458, 123, 129, 119, 131, 0], [471, 121, 127, 119, 130, 1], [485, 126, 148, 122, 152, 1], [498, 148, 153, 145, 156, 1], [511, 149, 154, 146, 158, 0], [525, 145, 149, 142, 152, 0], [538, 142, 147, 139, 151, 0], [551, 141, 148, 139, 152, 1], [565, 148, 153, 142, 156, 1], [578, 149, 153, 145, 155, 0], [592, 147, 151, 143, 153, 0], [605, 143, 149, 140, 152, 0], [618, 137, 143, 133, 148, 0], [632, 137, 140, 130, 144, 1], [645, 136, 140, 133, 144, 0], [658, 136, 140, 130, 144, 0], [671, 133, 139, 128, 143, 0], [685, 115, 134, 112, 137, 0], [698, 108, 115, 95, 120, 0], [711, 97, 111, 94, 114, 0], [724, 84, 98, 75, 102, 0], [738, 81, 85, 72, 90, 1], [751, 72, 88, 70, 91, 0], [765, 72, 84, 70, 88, 1], [778, 82, 93, 79, 96, 1], [791, 93, 100, 90, 104, 1], [805, 98, 101, 92, 120, 1], [818, 93, 98, 88, 102, 0], [831, 93, 97, 90, 100, 1], [845, 97, 108, 95, 112, 1], [858, 106, 112, 102, 114, 1], [871, 112, 116, 110, 118, 1]],
    cci: [32, 272, 50, 266, 70, 255, 95, 248, 125, 250, 155, 240, 190, 220, 215, 228, 235, 230, 260, 220, 285, 226, 310, 235, 340, 235, 365, 225, 395, 228, 425, 225, 440, 232, 470, 236, 485, 250, 500, 260, 520, 248, 560, 246, 590, 248, 620, 238, 660, 225, 700, 211, 730, 218, 770, 233, 800, 238, 830, 236, 850, 245, 873, 255]
  },
  btcusd: {
    title: "BTCUSD,H1", w: 320, h: 84, origin: [24, 54], right: 293, top: 2, bottom: 72, down: true,
    quote: "94533.45 94618.95 94447.65 94532.35",
    levels: [[103, "97062.00"], [157, "95606.70"], [213, "94107.30"], [267, "92652.00"]],
    now: [198, "94532.35"],
    dates: ["24 Apr 2025", "26 Apr 02:00", "27 Apr 10:00", "28 Apr 18:00", "30 Apr 02:00", "1 May 10:00", "2 May 18:00", "4 May 02:00", "5 May 10:00"],
    spread: 9, step: 2.2, dense: true,
    bars: [[30, 240, 36, 250, 50, 240, 65, 225, 70, 245, 80, 250, 95, 225, 105, 200, 110, 165, 125, 175, 140, 180, 155, 185, 170, 205, 190, 212, 210, 205, 225, 190, 235, 210, 265, 220, 290, 210, 305, 245, 320, 215, 340, 170, 352, 225, 365, 200, 380, 180, 395, 195, 405, 180, 445, 175, 458, 215, 470, 185, 480, 190, 495, 180, 503, 210, 508, 235, 520, 215, 540, 200, 565, 180, 575, 155, 590, 105, 605, 125, 620, 120, 635, 100, 650, 118, 665, 110, 672, 85, 690, 105, 710, 125, 735, 140, 760, 130, 780, 130, 800, 145, 820, 162, 850, 160, 858, 190, 868, 220, 880, 195, 893, 197]],
    spikes: [[36, 235, 267], [66, 200, 240], [110, 153, 190], [225, 170, 200], [306, 235, 263], [341, 158, 185], [355, 205, 240], [508, 215, 257], [593, 92, 115], [670, 71, 100], [868, 205, 236]]
  }
};

const at = (line, x) => {
  for (let i = 2; i < line.length; i += 2) {
    if (x <= line[i]) {
      const t = (x - line[i - 2]) / (line[i] - line[i - 2]);
      return line[i - 1] + t * (line[i + 1] - line[i - 1]);
    }
  }
  return line[line.length - 1];
};

// Repeatable noise so that every load draws the same bars
const noise = n => {
  const s = Math.sin(n * 12.9898) * 43758.5453;
  return s - Math.floor(s);
};

function plot(c) {
  const out = [];
  const [ox, oy] = c.origin;
  const py = y => Math.round((y - oy) / 3 - 0.5) + 0.5;
  const left = 2.5, right = c.right + 0.5, top = c.top + 0.5, bottom = c.bottom + 0.5;

  let grid = "";
  for (let i = 1; i < 17; i++) {
    const x = Math.round(2 + i * 17.8) + 0.5;
    if (x < right) grid += `M${x} ${top}V${bottom}`;
  }
  for (const y of [...c.levels.map(l => l[0]), ...(c.extraGrid || [])]) grid += `M${left} ${py(y)}H${right}`;
  out.push(`<path class="grid" d="${grid}"/>`);
  out.push(`<path class="now" d="M${left} ${py(c.now[0])}H${right}"/>`);

  const s = [];
  if (c.hist) {
    let d = "";
    for (let x = c.hist[0]; x < 878; x += 5.34) d += `M${x.toFixed(1)} ${c.zero}V${at(c.hist, x).toFixed(1)}`;
    s.push(`<path class="hist" d="${d}"/><polyline class="signal" points="${c.signal}"/>`);
  }
  if (c.cci) s.push(`<polyline class="cci" points="${c.cci}"/>`);
  let d = "";
  for (const run of c.bars || []) {
    for (let x = run[0], n = 1; x <= run[run.length - 2]; x += c.step, n++) {
      const y = at(run, x);
      const hi = y - 3 - noise(n + x) * c.spread, lo = y + 3 + noise(n * 3 + x) * c.spread;
      d += `M${x.toFixed(1)} ${hi.toFixed(1)}V${lo.toFixed(1)}`;
      if (!c.dense) d += `M${(x - 2).toFixed(1)} ${(y - 2).toFixed(1)}h2M${x.toFixed(1)} ${(y + 2).toFixed(1)}h2`;
    }
  }
  for (const [x, a, b] of c.spikes || []) d += `M${x} ${a}V${b}`;
  if (d) s.push(`<path class="green${c.dense ? " dense" : ""}" d="${d}"/>`);
  for (const a of c.average || []) s.push(`<polyline class="average" points="${a}"/>`);
  for (const [x, a, b, hi, lo, fall] of c.candles || []) {
    s.push(`<path class="green" d="M${x} ${hi}V${lo}"/><rect class="${fall ? "bear" : "bull"}" x="${x - 4}" y="${a}" width="8" height="${Math.max(b - a, 3)}"/>`);
  }
  out.push(`<g transform="scale(${1 / 3}) translate(${-ox} ${-oy})">${s.join("")}</g>`);

  out.push(`<path class="frame" d="M${left} ${top}H${right}V${bottom}H${left}Z"/>`);
  if (c.split) out.push(`<path class="split" d="M${left} ${c.split}H${right}"/>`);

  let ticks = "";
  for (const [y, label] of [...c.levels, ...(c.extra || [])]) {
    ticks += `M${right} ${py(y)}h2`;
    if (label) out.push(`<text x="${c.right + 3}" y="${py(y) + 2}">${label}</text>`);
  }
  c.dates.forEach((label, i) => {
    const x = Math.round(2 + i * 35.6);
    ticks += `M${x + 0.5} ${bottom}v2`;
    out.push(`<text x="${x}" y="${c.bottom + 8}">${label}</text>`);
  });
  out.push(`<path class="tick" d="${ticks}"/>`);
  const ny = py(c.now[0]);
  out.push(`<rect class="tag" x="${c.right + 1}" y="${ny - 3.5}" width="24" height="7"/><text class="tag-text" x="${c.right + 3}" y="${ny + 2}">${c.now[1]}</text>`);

  out.push(c.down ? `<path d="M5 5h4l-2 2z" fill="#fff"/>` : `<path d="M5 8h4l-2-2z" fill="#fff"/>`);
  out.push(`<text x="11" y="9">${c.title}</text><text x="44" y="9">${c.quote}</text>`);
  if (c.label) out.push(`<text x="4" y="${py(c.label[0]) + 2}">${c.label[1]}</text>`);
  return `<svg class="plot" viewBox="0 0 ${c.w} ${c.h}" role="img" aria-label="${c.title}">${out.join("")}</svg>`;
}

function deal(c) {
  if (!c.deal) return "";
  const [a, b, e, f, g, h] = c.deal;
  return `<div class="deal${c.compact ? " compact" : ""}">
    <div class="deal-top"><button>SELL</button><div class="lots"><button aria-label="減らす"><i class="caret"></i></button><input type="text" value="1.00" aria-label="${c.title} ロット"><button aria-label="増やす"><i class="caret rise"></i></button></div><button>BUY</button></div>
    <button class="price">${a}<b>${b}</b><sup>${e}</sup></button><button class="price">${f}<b>${g}</b><sup>${h}</sup></button>
  </div>`;
}

for (const el of document.querySelectorAll("[data-chart]")) {
  const c = charts[el.dataset.chart];
  el.innerHTML = `<header class="window-title"><svg><use href="#i-windows"/></svg><h2>${c.title}</h2>
    <button aria-label="最小化"><svg><use href="#i-min"/></svg></button><button aria-label="最大化"><svg><use href="#i-max"/></svg></button><button aria-label="閉じる"><svg><use href="#i-x"/></svg></button></header>
    <div class="chart">${plot(c)}${deal(c)}</div>`;
}
```
